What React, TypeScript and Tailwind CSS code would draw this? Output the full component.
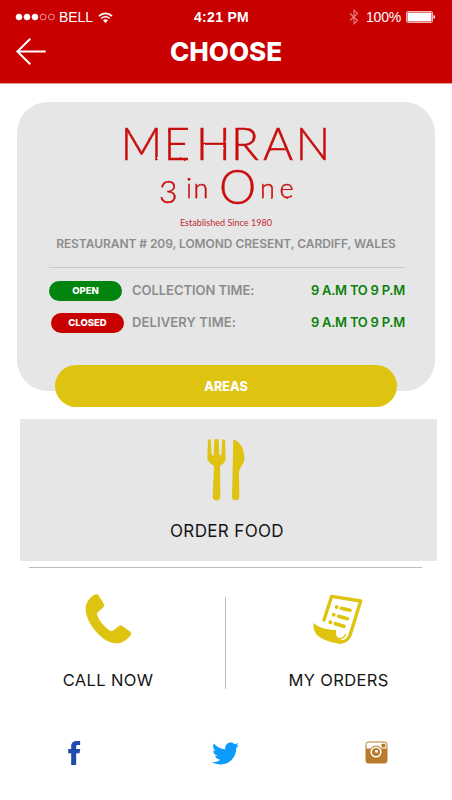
import type { ReactNode } from 'react';
import { FaTwitter } from 'react-icons/fa';

type HoursRowProps = {
  status: 'OPEN' | 'CLOSED';
  label: string;
  hours: string;
};

function StatusBar() {
  return (
    <div className="flex h-[34px] items-center pl-[15px] pr-[16px] font-['Liberation_Sans',sans-serif] text-[14px] text-white">
      <div className="flex w-[179px] items-center">
        <svg width="40" height="8" viewBox="0 0 40 8" fill="#fff" stroke="#fff">
          <circle cx="4" cy="4" r="3" strokeWidth="0.6" />
          <circle cx="12" cy="4" r="3" strokeWidth="0.6" />
          <circle cx="20" cy="4" r="3" strokeWidth="0.6" />
          <circle cx="28.2" cy="4" r="2.9" fill="none" strokeWidth="0.6" />
          <circle cx="36.4" cy="4" r="2.9" fill="none" strokeWidth="0.6" />
        </svg>
        <span className="ml-[4px] tracking-[-0.1px]">BELL</span>
        <svg className="ml-[5px]" width="15" height="11" viewBox="0 0 15 11" fill="none" stroke="#fff">
          <path d="M1 4.2C4.6.5 10.4.5 14 4.2" strokeWidth="1.7" />
          <path d="M3.3 6.5c2.3-2.3 6.1-2.3 8.4 0" strokeWidth="1.6" />
          <path d="M5 8.3c1.4-1.3 3.6-1.3 5 0L7.5 10.9z" fill="#fff" stroke="none" />
        </svg>
      </div>
      <span className="font-bold tracking-[0.3px] whitespace-nowrap">4:21 PM</span>
      <div className="ml-auto flex items-center">
        <svg width="10" height="16" viewBox="0 0 10 16" fill="none" stroke="#e88080" strokeWidth="1.1">
          <path d="M1 4.5l7.5 7L5 14.8V1.2l3.5 3.3L1 11.5" />
        </svg>
        <span className="ml-[7px] tracking-[-0.2px]">100%</span>
        <svg className="ml-[5px]" width="30" height="12" viewBox="0 0 30 12">
          <rect x="0.5" y="0.5" width="26" height="11" rx="1.5" fill="none" stroke="#f3b5b5" />
          <rect x="1.5" y="1.5" width="24" height="9" rx="0.8" fill="#fff" />
          <path d="M27.5 4c2 .4 2 3.6 0 4z" fill="#fff" />
        </svg>
      </div>
    </div>
  );
}

function Header() {
  return (
    <header className="h-[84px] border-b border-[#e3a0a0] bg-[#c90000]">
      <StatusBar />
      <div className="grid grid-cols-[60px_1fr_60px] items-center">
        <button type="button" className="pl-[16px]">
          <svg width="30" height="27" viewBox="0 0 30 27" fill="none" stroke="#fff" strokeWidth="2">
            <path d="M14.3.8L1.4 13.5l12.9 12.7M1.4 13.5H29.7" />
          </svg>
        </button>
        <h1 className="text-center text-[26px] font-extrabold leading-[35px] text-white">CHOOSE</h1>
      </div>
    </header>
  );
}

function Logo() {
  return (
    <svg
      className="mx-auto block overflow-visible"
      width="218"
      height="90"
      viewBox="117 120 218 90"
      fill="#c90a0a"
      stroke="#c90a0a"
      strokeWidth="0.4"
      fontFamily="Lato, sans-serif"
      fontWeight="300"
    >
      <filter id="rough" x="-5%" y="-5%" width="110%" height="110%">
        <feTurbulence type="fractalNoise" baseFrequency="0.3" numOctaves="2" seed="4" />
        <feDisplacementMap in="SourceGraphic" scale="1.6" xChannelSelector="R" yChannelSelector="G" />
      </filter>
      <g filter="url(#rough)">
        <text x="120.5 163.500 196 231 263 295.500" y="160" fontSize="46">
          MEHRAN
        </text>
        <text fontSize="27">
          <tspan x="159" y="203" fontSize="32">3 </tspan>
          <tspan x="186 193.500" y="198">in </tspan>
          <tspan x="219" y="203.500" fontSize="47">O</tspan>
          <tspan x="260 279.500" y="198">ne</tspan>
        </text>
      </g>
    </svg>
  );
}

function HoursRow({ status, label, hours }: HoursRowProps) {
  const open = status === 'OPEN';
  return (
    <div className="flex h-[20px] items-center">
      <span
        className={
          open
            ? 'h-[20px] w-[73px] rounded-full bg-[#02850e] text-center text-[9.5px] font-extrabold leading-[20px] text-white'
            : 'ml-[2px] h-[20px] w-[73px] rounded-full bg-[#c90000] text-center text-[9.5px] font-extrabold leading-[20px] text-white'
        }
      >
        {status}
      </span>
      <span
        className={
          open
            ? 'ml-[10px] text-[13px] font-semibold tracking-[-0.05px] text-[#8c8c8c]'
            : 'ml-[8px] text-[13px] font-semibold tracking-[0.12px] text-[#8c8c8c]'
        }
      >
        {label}
      </span>
      <span className="ml-auto text-[13px] font-semibold tracking-[-0.25px] text-[#0b800b]">{hours}</span>
    </div>
  );
}

function RestaurantCard() {
  return (
    <section className="ml-[17px] mt-[18px] h-[289px] w-[418px] rounded-[31px] bg-[#e6e6e6] pt-[18px]">
      <Logo />
      <p className="mt-[7px] text-center font-['Lato',sans-serif] text-[9.1px] leading-[12px] text-[#c42a33]">
        Established Since 1980
      </p>
      <p className="mt-[6px] text-center text-[12px] font-semibold leading-[18px] tracking-[-0.05px] whitespace-nowrap text-[#8c8c8c]">
        RESTAURANT # 209, LOMOND CRESENT, CARDIFF, WALES
      </p>
      <div className="ml-[32px] mt-[14px] flex w-[356px] flex-col gap-[12px] border-t border-[#c9c9c9] pt-[13px]">
        <HoursRow status="OPEN" label="COLLECTION TIME:" hours="9 A.M TO 9 P.M" />
        <HoursRow status="CLOSED" label="DELIVERY TIME:" hours="9 A.M TO 9 P.M" />
      </div>
      <button
        type="button"
        className="ml-[38px] mt-[32px] block h-[42px] w-[342px] rounded-[21px] bg-[#dec311] pt-[2px] text-center text-[12.5px] font-extrabold tracking-[0.1px] text-white"
      >
        AREAS
      </button>
    </section>
  );
}

function CutleryIcon() {
  return (
    <svg className="mr-[5px]" width="40" height="64" viewBox="140 38 120 192" fill="#dec311">
      <path d="M146 43l8-1 3 46c0 3 6 3 6 0l2-46h13l2 46c0 3 6 3 6 0l3-46 8 1 2 54c0 14-8 18-17 25l1 93c0 14-23 14-23 0l4-93c-9-7-18-11-20-25z" />
      <path d="M222 42c20 7 33 29 33 55 0 22-14 26-16 44l1 74c0 13-22 13-22 0z" />
    </svg>
  );
}

function PhoneIcon() {
  return (
    <svg className="ml-[2px]" width="50" height="52" viewBox="102 38 150 156" fill="#dec311">
      <path d="M138 42c4 0 7 1 9 5l14 23c3 5 1 9-3 13l-14 12c-4 4-3 8-1 13 6 15 18 30 33 40 5 4 10 6 15 2l11-9c5-5 10-7 15-4l21 15c5 3 7 8 4 12-11 15-25 25-41 25-18 0-36-8-53-25-23-22-40-52-41-76-1-19 10-36 26-45z" />
    </svg>
  );
}

function OrdersIcon() {
  return (
    <svg
      className="mr-[2px]"
      width="50"
      height="52"
      viewBox="129 38 150 156"
      fill="none"
      stroke="#dec311"
      strokeLinecap="round"
      strokeLinejoin="round"
    >
      <path d="M162 119l23-71 87 14-31 100c-5 16-19 25-35 23" strokeWidth="10" />
      <path d="M196 151c-2 14 4 25 16 24 8-1 12-6 15-13" strokeWidth="4" />
      <path
        d="M131 128c12 13 36 20 65 21-2 14 2 25 15 28 6 2 9 5 3 12-16 1-34-3-54-12-22-10-32-26-29-49z"
        fill="#dec311"
        stroke="none"
      />
      <path d="M200 80h.1M191 103h.1M181 126h.1" strokeWidth="12" />
      <path d="M214 84l26 6M206 108l26 7M196 130l26 8" strokeWidth="11" />
    </svg>
  );
}

function Tile({ icon, label }: { icon: ReactNode; label: string }) {
  return (
    <button type="button" className="flex flex-col items-center">
      {icon}
      <span className="mt-[23px] text-[16.5px] leading-[24px] tracking-[0.35px] whitespace-nowrap text-[#161616]">
        {label}
      </span>
    </button>
  );
}

function SocialLinks() {
  return (
    <footer className="mt-[46px] flex h-[30px] items-center">
      <svg className="ml-[68px]" width="13" height="24" viewBox="55 30 38 72" fill="#204aae">
        <path d="M64 102V67h-9V54h9V46c0-11 7-16 17-16h10v12h-7c-4 0-5 2-5 5v7h12l-2 13H79v35z" />
      </svg>
      <FaTwitter className="ml-[131px] h-[27px] w-[27px] text-[#0d9cfb]" />
      <svg className="ml-[126px] mb-px" width="23" height="23" viewBox="0 0 23 23">
        <rect x="0.5" y="0.5" width="22" height="22" rx="3.5" fill="#b87b2c" />
        <path d="M1.5 7.5V3.500c0-1.200.8-2 2-2h16c1.200 0 2 .8 2 2v4z" fill="#fff" />
        <rect x="16.500" y="2.800" width="3.800" height="3.800" rx="0.5" fill="#b87b2c" />
        <circle cx="11" cy="11" r="6.500" fill="#b87b2c" />
        <circle cx="11" cy="11" r="5.600" fill="#fff" />
        <circle cx="11" cy="11" r="4" fill="#b87b2c" />
        <circle cx="11.500" cy="10.300" r="1.500" fill="#fff" />
      </svg>
    </footer>
  );
}

export default function App() {
  return (
    <main className="h-[800px] w-[452px] overflow-hidden bg-white font-['Inter',sans-serif]">
      <Header />
      <RestaurantCard />
      <section className="ml-[20px] mt-[28px] flex h-[142px] w-[417px] flex-col items-center bg-[#e6e6e6] pt-[19px]">
        <CutleryIcon />
        <span className="mr-[3px] mt-[17px] text-[17px] leading-[24px] tracking-[0.35px] text-[#161616]">ORDER FOOD</span>
      </section>
      <section className="ml-[29px] mt-[6px] grid w-[393px] grid-cols-[158px_1fr_167px] border-t border-[#bdbdbd] pt-[25px]">
        <Tile icon={<PhoneIcon />} label="CALL NOW" />
        <div className="ml-[38px] mt-[4px] h-[92px] w-px bg-[#bdbdbd]" />
        <Tile icon={<OrdersIcon />} label="MY ORDERS" />
      </section>
      <SocialLinks />
    </main>
  );
}
